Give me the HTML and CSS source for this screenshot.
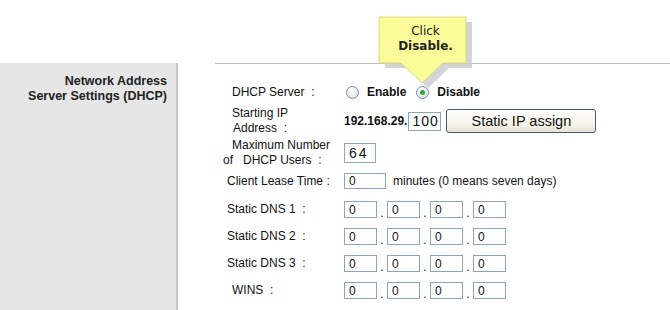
FILE: index.html
```html
<!DOCTYPE html>
<html lang="en">
<head>
    <meta charset="UTF-8">
    <title>Network Address Server Settings (DHCP)</title>
    <link rel="stylesheet" href="styles.css">
</head>
<body>
    <div class="page">
        <div class="top"></div>
        <div class="main">
            <div class="side">
                Network Address<br>Server Settings (DHCP)
            </div>
            <div class="content">
                <div class="row r1">
                    <div class="lbl"><span class="in9">DHCP Server&nbsp; :</span></div>
                    <div class="fld">
                        <span class="radio"></span><span class="opt">Enable</span>
                        <span class="radio on"></span><span class="opt">Disable</span>
                    </div>
                </div>
                <div class="row r2">
                    <div class="lbl"><span class="in9">Starting IP</span><br><span class="in10">Address&nbsp; :</span></div>
                    <div class="fld">
                        <span class="prefix">192.168.29.</span>
                        <input class="box wide-num" type="text" value="100">
                        <button class="btn" type="button">Static IP assign</button>
                    </div>
                </div>
                <div class="row r3">
                    <div class="lbl"><span class="in9">Maximum Number</span><br>of&nbsp;&nbsp; DHCP Users&nbsp; :</div>
                    <div class="fld">
                        <input class="box users" type="text" value="64">
                    </div>
                </div>
                <div class="row r4">
                    <div class="lbl"><span class="in4">Client Lease Time :</span></div>
                    <div class="fld">
                        <input class="box lease" type="text" value="0">
                        <span class="note">minutes (0 means seven days)</span>
                    </div>
                </div>
                <div class="row dns">
                    <div class="lbl"><span class="in4">Static DNS 1&nbsp; :</span></div>
                    <div class="fld">
                        <input class="box ip" type="text" value="0"><span class="dot">.</span><input class="box ip" type="text" value="0"><span class="dot">.</span><input class="box ip" type="text" value="0"><span class="dot">.</span><input class="box ip" type="text" value="0">
                    </div>
                </div>
                <div class="row dns">
                    <div class="lbl"><span class="in4">Static DNS 2&nbsp; :</span></div>
                    <div class="fld">
                        <input class="box ip" type="text" value="0"><span class="dot">.</span><input class="box ip" type="text" value="0"><span class="dot">.</span><input class="box ip" type="text" value="0"><span class="dot">.</span><input class="box ip" type="text" value="0">
                    </div>
                </div>
                <div class="row dns">
                    <div class="lbl"><span class="in4">Static DNS 3&nbsp; :</span></div>
                    <div class="fld">
                        <input class="box ip" type="text" value="0"><span class="dot">.</span><input class="box ip" type="text" value="0"><span class="dot">.</span><input class="box ip" type="text" value="0"><span class="dot">.</span><input class="box ip" type="text" value="0">
                    </div>
                </div>
                <div class="row dns">
                    <div class="lbl"><span class="in9">WINS&nbsp; :</span></div>
                    <div class="fld">
                        <input class="box ip" type="text" value="0"><span class="dot">.</span><input class="box ip" type="text" value="0"><span class="dot">.</span><input class="box ip" type="text" value="0"><span class="dot">.</span><input class="box ip" type="text" value="0">
                    </div>
                </div>
            </div>
        </div>

        <!-- callout over the Disable radio -->
        <div class="callout">
            <svg width="104" height="80" viewBox="0 0 104 80">
                <polygon points="9,10 96,10 96,56 73,56 52,76 31,56 9,56" fill="#c9c9c9" opacity="0.8"/>
                <polygon points="3,5 90,5 90,51 67,51 46,71 25,51 3,51" fill="#fbfb9a" stroke="#d8d88e" stroke-width="1"/>
            </svg>
            <div class="callout-text">Click<br><b>Disable.</b></div>
        </div>
    </div>
</body>
</html>
```

FILE: styles.css
```css
* {
    margin: 0;
    padding: 0;
    box-sizing: border-box;
}

body {
    font-family: "Liberation Sans", Arial, sans-serif;
    font-size: 12px;
    color: #111;
    background: #fff;
}

.page {
    position: relative;
    width: 670px;
    height: 310px;
    overflow: hidden;
}

.top {
    height: 63px;
}

.main {
    display: flex;
    height: 247px;
}

/* left grey column */
.side {
    width: 178px;
    background: #e6e6e6;
    border-right: 2px solid #c6c6c6;
    padding: 11px 9px 0 0;
    text-align: right;
    font-weight: bold;
    font-size: 12.5px;
    line-height: 15px;
    color: #222;
}

.content {
    flex: 1;
    margin-left: 37px;
    border-top: 1px solid #bdbdbd;
    padding: 17px 0 0 8px;
}

.row {
    display: flex;
    align-items: center;
}

.r1 { height: 22px; }
.r2 { height: 36px; }
.r3 { height: 27px; }
.r4 { height: 30px; }
.dns { height: 27px; }

.lbl {
    width: 121px;
    line-height: 15px;
    white-space: nowrap;
}

.in4 { padding-left: 4px; }
.in9 { padding-left: 9px; }
.in10 { padding-left: 10px; }

.fld {
    display: flex;
    align-items: center;
}

/* radios */
.radio {
    width: 13px;
    height: 13px;
    border-radius: 50%;
    border: 1px solid #7b8ea6;
    background: radial-gradient(circle at 40% 35%, #ffffff, #e4e6ea 70%, #cfd3da);
    margin-left: 2px;
    position: relative;
}

.radio.on::after {
    content: "";
    position: absolute;
    left: 3px;
    top: 3px;
    width: 5px;
    height: 5px;
    border-radius: 50%;
    background: #2fa83a;
}

.opt {
    font-weight: bold;
    margin-left: 8px;
    margin-right: 8px;
}

.prefix {
    font-weight: bold;
    margin-right: 1px;
}

.box {
    font-family: "Liberation Sans", Arial, sans-serif;
    font-size: 12px;
    color: #111;
    border: 1px solid #8ea3bd;
    background: #fff;
    padding: 0 0 0 4px;
    outline: none;
}

.ip {
    width: 33px;
    height: 17px;
}

.dot {
    width: 10px;
    text-align: center;
    align-self: flex-end;
    line-height: 10px;
}

.lease {
    width: 42px;
    height: 16px;
}

.note {
    margin-left: 7px;
}

.wide-num {
    width: 33px;
    height: 19px;
    font-size: 14px;
    letter-spacing: 1px;
    padding-left: 3px;
}

.users {
    width: 32px;
    height: 20px;
    font-size: 14px;
    letter-spacing: 2px;
    padding-left: 4px;
}

.btn {
    width: 150px;
    height: 24px;
    margin-left: 5px;
    border: 1px solid #4a5a6e;
    border-radius: 3px;
    background: linear-gradient(#ffffff, #f6f4ec 60%, #e8e4d4);
    font-family: "Liberation Sans", Arial, sans-serif;
    font-size: 14.5px;
    color: #111;
}

/* yellow tip */
.callout {
    position: absolute;
    left: 376px;
    top: 12px;
    width: 104px;
    height: 80px;
}

.callout svg {
    position: absolute;
    left: 0;
    top: 0;
}

.callout-text {
    position: absolute;
    left: 6px;
    top: 12px;
    width: 87px;
    text-align: center;
    font-family: "DejaVu Sans", Verdana, sans-serif;
    font-size: 12px;
    line-height: 15px;
    color: #222;
}
```
